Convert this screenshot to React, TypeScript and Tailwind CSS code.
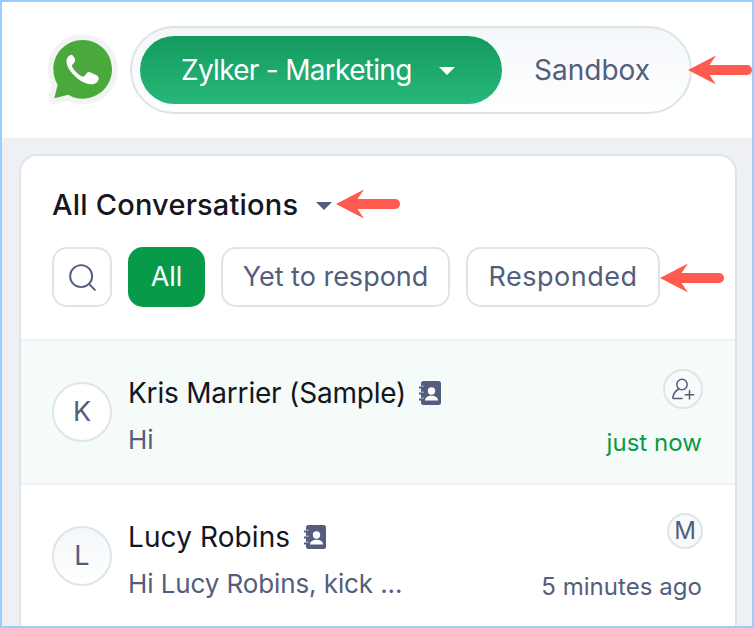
import { Search } from 'lucide-react'

const font = { fontFamily: 'Inter, sans-serif' }

function WhatsappLogo() {
  return (
    <svg width="71" height="71" viewBox="141 97 213 213" className="shrink-0">
      <path
        d="M248 115C199 115 160 154 160 203C160 220 165 236 173 249L163 290L205 279C218 287 232 291 248 291C297 291 336 252 336 203C336 154 297 115 248 115Z"
        fill="#4aa93b"
        stroke="#f2f3f3"
        strokeWidth="34"
        strokeLinejoin="round"
        paintOrder="stroke"
      />
      <path
        d="M212 160C203 163 198 172 200 185C204 208 240 246 272 248C286 249 296 240 296 230C296 224 292 222 288 220L270 212C265 210 262 212 259 216L254 222C250 226 247 225 242 222C232 216 222 206 217 196C215 192 216 190 219 187L224 181C226 178 226 175 225 172L219 162C217 160 215 159 212 160Z"
        fill="#ffffff"
      />
    </svg>
  )
}

function ContactIcon() {
  return (
    <svg width="22" height="24" viewBox="0 0 22 24" className="shrink-0">
      <rect x="2" y="0" width="20" height="24" rx="2.5" fill="#525e7c" />
      <path d="M0.5 6.5h4M0.5 12.5h4M0.5 18.5h4" stroke="#525e7c" strokeWidth="2" strokeLinecap="round" />
      <path d="M2.5 5.2h2M2.5 11.2h2M2.5 17.2h2" stroke="#ffffff" strokeWidth="0.8" />
      <circle cx="12.5" cy="10" r="3.7" fill="#ffffff" />
      <path d="M6 19.5c0-3.2 2.9-4.8 6.5-4.8s6.5 1.6 6.5 4.8z" fill="#ffffff" />
    </svg>
  )
}

function AddUserIcon() {
  return (
    <svg width="24" height="24" viewBox="0 0 24 24" fill="none" stroke="#525e7c" strokeWidth="1.5" strokeLinecap="round">
      <circle cx="11" cy="7.5" r="5.2" />
      <path d="M7.7 12C5 13.5 2.6 16.5 1.8 20.5C1.7 21 2 21.4 2.6 21.4H11" />
      <path d="M18.5 13.5V22M14.3 17.8H22.7" />
    </svg>
  )
}

function Arrow({ className }: { className: string }) {
  return (
    <svg width="64" height="30" viewBox="0 0 64 30" className={`absolute ${className}`}>
      <path
        d="M0 15L28 0.5L21.5 10H59A5 5 0 0 1 59 20H21.5L28 29.5Z"
        fill="#ff5a4d"
      />
    </svg>
  )
}

export default function App() {
  return (
    <div
      className="relative flex flex-col w-[754px] h-[628px] border-2 border-[#99ccff] bg-white overflow-hidden"
      style={font}
    >
      {/* header */}
      <header className="flex items-center gap-[12px] h-[136px] shrink-0 pl-[45px] pb-[1px]">
        <WhatsappLogo />
        <div className="flex items-center w-[562px] h-[88px] p-[8px] rounded-full border-2 border-[#dbe4e9] bg-linear-to-b from-[#f4f7fa] to-white">
          <div className="flex items-center justify-between w-[362px] h-[68px] pl-[41px] pr-[47px] rounded-full bg-linear-to-b from-[#139a5f] to-[#27b87a] text-white text-[28px] tracking-[-0.7px]">
            <span>Zylker - Marketing</span>
            <span className="w-0 h-0 mt-[3px] border-x-[8px] border-x-transparent border-t-[8px] border-t-white" />
          </div>
          <span className="ml-[32px] text-[28px] text-[#525e7c]">Sandbox</span>
        </div>
      </header>

      <main className="flex-1 min-h-0 bg-[#eef0f4] pl-[17px] pr-[15px] pt-[16px]">
        <section className="h-full rounded-t-[18px] border-2 border-b-0 border-[#dde5ea] bg-white">
          <div className="pl-[31px] pr-[32px] pt-[32px] pb-[32px]">
            <div className="flex items-center gap-[18px] h-[34px]">
              <h2 className="font-medium text-[29px] tracking-[0.2px] text-[#15171f]">All Conversations</h2>
              <span className="w-0 h-0 mt-[2px] border-x-[8px] border-x-transparent border-t-[8px] border-t-[#525e7c]" />
            </div>
            <div className="flex gap-[16px] mt-[25px] text-[27px]">
              <div className="flex items-center justify-center w-[60px] h-[60px] rounded-[15px] border-2 border-[#dde5ea]">
                <Search size={33} strokeWidth={1.4} color="#525e7c" />
              </div>
              <div className="flex items-center justify-center w-[77px] h-[60px] rounded-[15px] bg-[#079a48] text-white">
                All
              </div>
              <div className="flex items-center justify-center w-[229px] h-[60px] rounded-[15px] border-2 border-[#dde5ea] text-[#525e7c]">
                Yet to respond
              </div>
              <div className="flex items-center justify-center w-[194px] h-[60px] rounded-[15px] border-2 border-[#dde5ea] text-[#525e7c] tracking-[0.5px]">
                Responded
              </div>
            </div>
          </div>

          <div className="flex h-[146px] pl-[31px] pr-[32px] pt-[28px] border-y-2 border-[#eef2f5] bg-[#f5fbf9]">
            <div className="flex items-center justify-center w-[60px] h-[60px] mt-[13px] rounded-full border-2 border-[#dde5ea] bg-white text-[27px] text-[#525e7c]">
              K
            </div>
            <div className="flex-1 ml-[16px] mt-[7px]">
              <div className="flex items-center gap-[13px] h-[34px]">
                <span className="text-[28px] tracking-[-0.2px] text-[#14161e]">Kris Marrier (Sample)</span>
                <ContactIcon />
              </div>
              <p className="mt-[13px] text-[26px] leading-[34px] text-[#525e7c]">Hi</p>
            </div>
            <div className="flex flex-col items-end">
              <div className="flex items-center justify-center w-[40px] h-[40px] rounded-full border-2 border-[#dde5ea] bg-[#f8fafb]">
                <AddUserIcon />
              </div>
              <span className="mt-[17px] mr-[1px] text-[24px] tracking-[0.05px] leading-[34px] text-[#079a48]">just now</span>
            </div>
          </div>

          <div className="flex pl-[31px] pr-[32px] pt-[28px]">
            <div className="flex items-center justify-center w-[60px] h-[60px] mt-[13px] rounded-full border-2 border-[#dde5ea] bg-linear-to-b from-[#f4f7fa] to-white text-[27px] text-[#525e7c]">
              L
            </div>
            <div className="flex-1 ml-[16px] mt-[7px]">
              <div className="flex items-center gap-[14px] h-[34px]">
                <span className="text-[28px] tracking-[0.1px] text-[#14161e]">Lucy Robins</span>
                <ContactIcon />
              </div>
              <p className="mt-[13px] text-[26px] tracking-[-0.1px] leading-[34px] text-[#525e7c]">Hi Lucy Robins, kick ...</p>
            </div>
            <div className="flex flex-col items-end">
              <div className="flex items-center justify-end h-[40px]">
                <div className="flex items-center justify-center w-[36px] h-[36px] -mt-[4px] rounded-full border-2 border-[#dde5ea] bg-[#f8fafb] text-[24px] text-[#525e7c]">
                  M
                </div>
              </div>
              <span className="mt-[17px] mr-[1px] text-[24px] tracking-[0.05px] leading-[34px] text-[#525e7c]">5 minutes ago</span>
            </div>
          </div>
        </section>
      </main>

      {/* annotation arrows */}
      <Arrow className="left-[686px] top-[53px]" />
      <Arrow className="left-[334px] top-[187px]" />
      <Arrow className="left-[658px] top-[261px]" />
    </div>
  )
}
